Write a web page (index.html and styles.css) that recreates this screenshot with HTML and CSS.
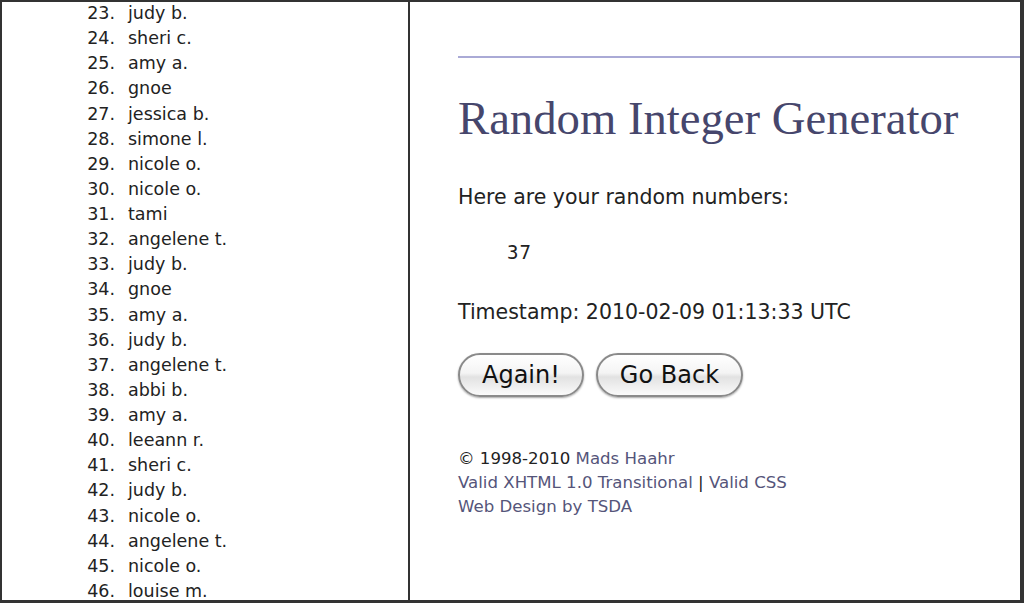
FILE: index.html
```html
<!DOCTYPE html>
<html lang="en">
<head>
    <meta charset="UTF-8">
    <title>RANDOM.ORG - Integer Generator</title>
    <link rel="stylesheet" href="styles.css">
</head>
<body>
    <div class="frame">
        <div class="names">
            <ol start="23">
                <li>judy b.</li>
                <li>sheri c.</li>
                <li>amy a.</li>
                <li>gnoe</li>
                <li>jessica b.</li>
                <li>simone l.</li>
                <li>nicole o.</li>
                <li>nicole o.</li>
                <li>tami</li>
                <li>angelene t.</li>
                <li>judy b.</li>
                <li>gnoe</li>
                <li>amy a.</li>
                <li>judy b.</li>
                <li>angelene t.</li>
                <li>abbi b.</li>
                <li>amy a.</li>
                <li>leeann r.</li>
                <li>sheri c.</li>
                <li>judy b.</li>
                <li>nicole o.</li>
                <li>angelene t.</li>
                <li>nicole o.</li>
                <li>louise m.</li>
            </ol>
        </div>

        <div class="generator">
            <hr class="rule">
            <h1>Random Integer Generator</h1>
            <p class="intro">Here are your random numbers:</p>
            <pre class="result">37</pre>
            <p class="stamp">Timestamp: 2010-02-09 01:13:33 UTC</p>
            <form class="actions">
                <button type="button">Again!</button>
                <button type="button">Go Back</button>
            </form>
            <div class="footer">
                &copy; 1998-2010 <a href="#">Mads Haahr</a><br>
                <a href="#">Valid XHTML 1.0 Transitional</a> | <a href="#">Valid CSS</a><br>
                <a href="#">Web Design by TSDA</a>
            </div>
        </div>
    </div>
</body>
</html>
```

FILE: styles.css
```css
html, body {
    margin: 0;
    padding: 0;
    background: #fff;
}
.frame {
    box-sizing: border-box;
    height: 603px;
    border: 2px solid #333;
    border-right-width: 4px;
    border-bottom-width: 3px;
    display: grid;
    grid-template-columns: 408px 1fr;
    overflow: hidden;
}
.names {
    border-right: 2px solid #333;
    font-family: "DejaVu Sans", Verdana, sans-serif;
    font-size: 17.5px;
    line-height: 25.12px;
    color: #222;
}
.names ol {
    margin: -1px 0 0;
    padding: 0 0 0 46px;
    list-style: none;
}
.names li::before {
    content: counter(list-item) ".";
    display: inline-block;
    width: 67px;
    margin-right: 13px;
    text-align: right;
}
.generator {
    padding-left: 48px;
    color: #222;
    font-family: "DejaVu Sans", "Lucida Grande", sans-serif;
    font-size: 20.5px;
}
.rule {
    margin: 54px 0 0;
    border: 0;
    height: 2px;
    background: #aaaad6;
}
h1 {
    font-family: "Liberation Serif", Georgia, serif;
    font-weight: normal;
    font-size: 46.7px;
    color: #46466c;
    margin: 32px 0 0;
    line-height: 56px;
}
p {
    margin: 0;
    line-height: 26px;
}
.intro {
    margin-top: 38px;
}
.result {
    font-family: "DejaVu Sans Mono", monospace;
    font-size: 19px;
    letter-spacing: 1px;
    margin: 29px 0 0 49px;
    line-height: 26px;
}
.stamp {
    margin-top: 34px;
}
.actions {
    display: flex;
    gap: 12px;
    margin-top: 28px;
}
.actions button {
    font-family: "DejaVu Sans", "Lucida Grande", sans-serif;
    font-size: 24px;
    color: #111;
    height: 44px;
    padding: 0 22px;
    border: 2px solid #8a8a8a;
    border-radius: 22px;
    background: linear-gradient(#ffffff, #f4f4f4 45%, #e2e2e2 55%, #fafafa);
    box-shadow: 0 1px 2px rgba(0, 0, 0, 0.35);
}
.footer {
    margin-top: 50px;
    font-size: 16.6px;
    line-height: 24px;
    color: #222;
}
.footer a {
    color: #55557a;
    text-decoration: none;
}
```
